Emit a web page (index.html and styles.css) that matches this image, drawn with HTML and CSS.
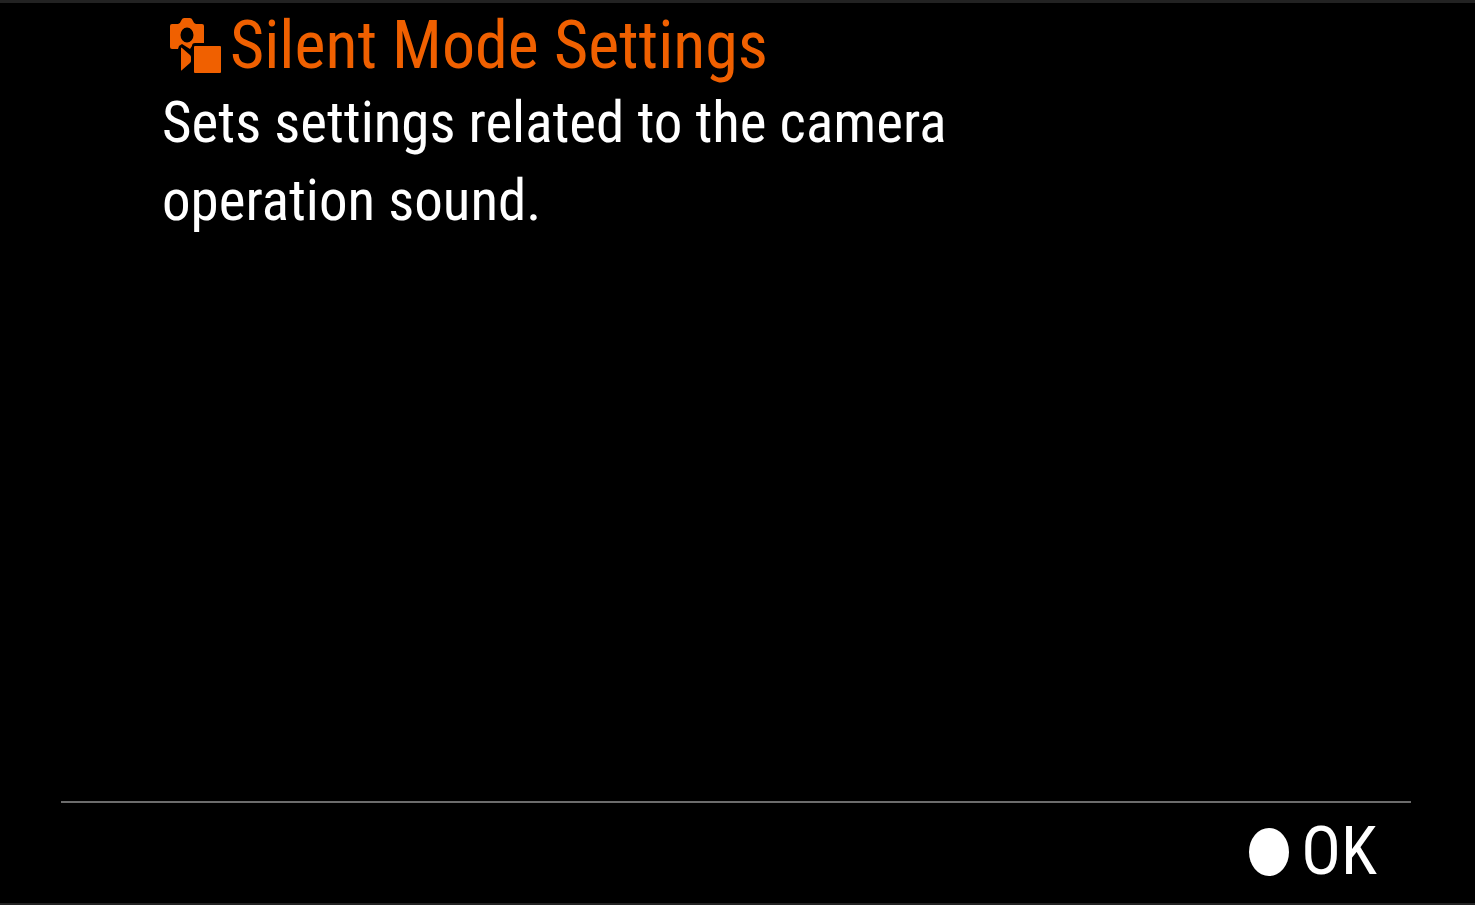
FILE: index.html
```html
<!DOCTYPE html>
<html lang="en">
<head>
<meta charset="utf-8">
<meta name="viewport" content="width=device-width, initial-scale=1">
<title>Silent Mode Settings</title>
<link rel="stylesheet" href="styles.css">
</head>
<body>
<div class="screen">
  <main class="help">
    <h1 class="title">
      <svg class="title-icon" viewBox="0 0 52 56" aria-hidden="true">
        <path fill-rule="evenodd" d="M2 6H8Q10 6 11 3Q12 0 14 0H20Q22 0 23 3Q24 6 26 6H32Q34 6 34 8V25H25Q22 25 22 28L20 31L12 26L9 28L8 31H2Q0 31 0 29V8Q0 6 2 6ZM17 9.500A6.500 7.500 0 1 0 17 24.500A6.500 7.500 0 1 0 17 9.500Z"/>
        <path d="M11 30Q11 29 12 30L20 37Q21 38 21 39V43Q21 44 20 45L12 52Q11 53 11 52Z"/>
        <rect x="24" y="28" width="27" height="27" rx="1"/>
      </svg>
      <span>Silent Mode Settings</span>
    </h1>
    <p class="description">Sets settings related to the camera operation sound.</p>
  </main>
  <footer class="footer">
    <button class="ok" type="button">
      <svg class="ok-icon" viewBox="0 0 40 48" aria-hidden="true"><ellipse cx="20" cy="24" rx="20" ry="24"/></svg>
      <span>OK</span>
    </button>
  </footer>
</div>
</body>
</html>
```
FILE: styles.css
```css
* {
  box-sizing: border-box;
}

body {
  margin: 0;
  background: #000;
  color: #fff;
  font-family: "Roboto Condensed", Roboto, sans-serif;
}

.screen {
  display: flex;
  flex-direction: column;
  min-height: 100vh;
  padding: 0 64px 0 61px;
  border-top: 3px solid #222;
  border-bottom: 2px solid #222;
}

.help {
  flex: 1;
  padding: 5px 0 0 101px;
}

.title {
  display: flex;
  align-items: center;
  gap: 8px;
  margin: 0;
  padding-left: 8px;
  color: #f06000;
  font-size: 66px;
  font-weight: 400;
  line-height: 76px;
}

.title-icon {
  width: 52px;
  height: 56px;
  fill: currentColor;
}

.description {
  max-width: 900px;
  margin: 0;
  font-size: 57px;
  line-height: 78px;
}

.footer {
  display: flex;
  justify-content: flex-end;
  padding: 10px 34px 12px 0;
  border-top: 2px solid #6c6c6c;
}

.ok {
  display: flex;
  align-items: center;
  gap: 12px;
  padding: 0;
  border: 0;
  background: none;
  color: inherit;
  font: inherit;
  font-size: 66px;
  line-height: 78px;
}

.ok-icon {
  width: 40px;
  height: 48px;
  fill: currentColor;
}
```
